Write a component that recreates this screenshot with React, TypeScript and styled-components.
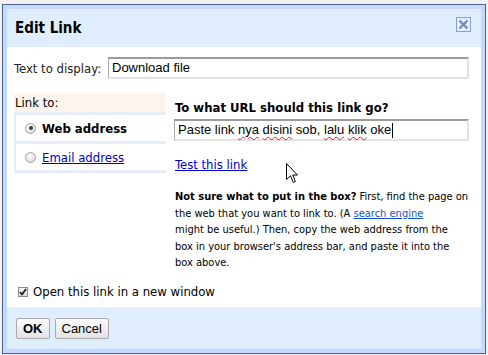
import React from 'react'
import styled, {createGlobalStyle, css} from 'styled-components'

const UI = `"DejaVu Sans Condensed", "DejaVu Sans", sans-serif`
const ARIAL = `"Liberation Sans", Arial, sans-serif`

const GlobalStyle = createGlobalStyle`
    html, body {
        margin: 0;
        padding: 0;
        background: #f2f2f2;
    }
    body {
        font-family: ${UI};
    }
`

// 画面全体
const Page = styled.div`
    position: relative;
    width: 488px;
    height: 355px;
    padding: 4px 2px 0 2px;
    box-sizing: border-box;
`

const Dialog = styled.div`
    width: 484px;
    border: 1px solid #4a6089;
    background: #c3d9ff;
    padding: 4px;
    box-sizing: border-box;
    display: flex;
    flex-direction: column;
`

const TitleBar = styled.div`
    height: 38px;
    background: #e0edfe;
    display: flex;
    align-items: flex-start;
    justify-content: space-between;
    padding: 0 10px 0 8px;
`

const Title = styled.div`
    font-family: ${UI};
    font-weight: bold;
    font-size: 15px;
    line-height: 38px;
    color: #000;
`

const CloseButton = styled.div`
    margin-top: 8px;
    width: 15px;
    height: 15px;
    box-sizing: border-box;
    border: 1px solid #8ba0c9;
    background: #e6efff;
    display: flex;
    align-items: center;
    justify-content: center;
`

const Body = styled.div`
    height: 260px;
    background: #fff;
    padding: 10px 12px 0 7px;
    box-sizing: border-box;
`

const Row = styled.div`
    display: flex;
    align-items: center;
`

const FieldLabel = styled.div`
    width: 94px;
    font-size: 13px;
    color: #222;
    white-space: nowrap;
`

const TextBox = styled.div`
    flex: 1;
    height: 22px;
    box-sizing: border-box;
    border-style: solid;
    border-width: 2px 2px 2px 1px;
    border-color: #9b9b9b #e3e3e3 #e3e3e3 #a9a9a9;
    padding: 0 3px;
    font-family: ${ARIAL};
    font-size: 13px;
    line-height: 18px;
    color: #000;
    white-space: nowrap;
    display: flex;
    align-items: center;
`

const Misspelled = styled.span`
    text-decoration: underline wavy #e02020;
    text-decoration-thickness: 1px;
    text-underline-offset: 2px;
`

const Caret = styled.span`
    display: inline-block;
    width: 1px;
    height: 15px;
    background: #000;
    margin-left: 1px;
`

const LinkSection = styled.div`
    margin-top: 14px;
    display: flex;
    align-items: flex-start;
    gap: 8px;
`

const TabColumn = styled.div`
    width: 152px;
    flex-shrink: 0;
`

const TabHeader = styled.div`
    height: 19px;
    line-height: 19px;
    background: #fdf4ee;
    font-size: 13px;
    color: #000;
    padding-left: 1px;
`

const TabList = styled.div`
    background: #e6ecf8;
    padding: 3px 0 3px 2px;
    display: flex;
    flex-direction: column;
    gap: 3px;
`

const Tab = styled.div`
    height: 26px;
    background: #fff;
    display: flex;
    align-items: center;
    padding-left: 9px;
    gap: 6px;
`

const Radio = styled.span<{$checked?: boolean}>`
    width: 11px;
    height: 11px;
    border-radius: 50%;
    box-sizing: border-box;
    border: 1px solid #a3a3a3;
    background: radial-gradient(circle at 40% 35%, #ffffff 0%, #e4e4e4 60%, #c8c8c8 100%);
    position: relative;
    ${p => p.$checked && css`
        &::after {
            content: '';
            position: absolute;
            left: 2.5px;
            top: 2.5px;
            width: 4px;
            height: 4px;
            border-radius: 50%;
            background: #3a3a3a;
        }
    `}
`

const TabLabel = styled.span`
    font-size: 13px;
    font-weight: bold;
    color: #000;
`

const BlueLink = styled.span`
    font-size: 13px;
    color: #0000cc;
    text-decoration: underline;
`

const Panel = styled.div`
    flex: 1;
    display: flex;
    flex-direction: column;
    padding-top: 7px;
`

const Question = styled.div`
    font-size: 13px;
    font-weight: bold;
    line-height: 16px;
    color: #000;
    padding-left: 1px;
    margin-bottom: 3px;
`

const TestLink = styled(BlueLink)`
    margin-top: 16px;
    line-height: 16px;
    padding-left: 1px;
    align-self: flex-start;
`

// 改行位置は元の画面に合わせてる
const Help = styled.p`
    margin: 16px 0 0;
    padding-left: 1px;
    font-size: 11px;
    line-height: 16.5px;
    color: #000;
    white-space: nowrap;
`

const SearchLink = styled.span`
    color: #1155cc;
    text-decoration: underline;
`

const CheckRow = styled.div`
    margin-top: 12px;
    display: flex;
    align-items: center;
    gap: 5px;
    padding-left: 4px;
    font-size: 13px;
    line-height: 16px;
    color: #000;
`

const CheckBox = styled.span`
    width: 10px;
    height: 10px;
    box-sizing: border-box;
    border: 1px solid #8c8c8c;
    background: linear-gradient(#f4f4f4, #dcdcdc);
    display: flex;
    align-items: center;
    justify-content: center;
`

const Footer = styled.div`
    height: 42px;
    background: #e0edfe;
    display: flex;
    align-items: flex-start;
    gap: 5px;
    padding: 11px 0 0 9px;
    box-sizing: border-box;
`

const Button = styled.div<{$primary?: boolean}>`
    height: 21px;
    box-sizing: border-box;
    padding: 0 6px;
    border: 1px solid #a9a9a9;
    border-radius: 2px;
    background: linear-gradient(#fbfbfb, #e3e3e3);
    font-family: ${ARIAL};
    font-size: 13px;
    font-weight: ${p => (p.$primary ? 'bold' : 'normal')};
    line-height: 19px;
    color: #000;
`

// マウスカーソル（上に重なってる）
const Pointer = styled.svg`
    position: absolute;
    left: 286px;
    top: 163px;
`

export default function App() {
    return (
        <Page>
            <GlobalStyle />
            <Dialog>
                <TitleBar>
                    <Title>Edit Link</Title>
                    <CloseButton>
                        <svg width="11" height="11" viewBox="0 0 11 11">
                            <path d="M1.5 1.5 L9.5 9.5 M9.5 1.5 L1.5 9.5" stroke="#6f87b7" strokeWidth="2.2" />
                        </svg>
                    </CloseButton>
                </TitleBar>
                <Body>
                    <Row>
                        <FieldLabel>Text to display:</FieldLabel>
                        <TextBox>Download file</TextBox>
                    </Row>
                    <LinkSection>
                        <TabColumn>
                            <TabHeader>Link to:</TabHeader>
                            <TabList>
                                <Tab>
                                    <Radio $checked />
                                    <TabLabel>Web address</TabLabel>
                                </Tab>
                                <Tab>
                                    <Radio />
                                    <BlueLink>Email address</BlueLink>
                                </Tab>
                            </TabList>
                        </TabColumn>
                        <Panel>
                            <Question>To what URL should this link go?</Question>
                            <TextBox>
                                Paste link&nbsp;<Misspelled>nya</Misspelled>&nbsp;<Misspelled>disini</Misspelled>&nbsp;sob,&nbsp;<Misspelled>lalu</Misspelled>&nbsp;<Misspelled>klik</Misspelled>&nbsp;oke<Caret />
                            </TextBox>
                            <TestLink>Test this link</TestLink>
                            <Help>
                                <b>Not sure what to put in the box?</b> First, find the page on<br />
                                the web that you want to link to. (A <SearchLink>search engine</SearchLink><br />
                                might be useful.) Then, copy the web address from the<br />
                                box in your browser's address bar, and paste it into the<br />
                                box above.
                            </Help>
                        </Panel>
                    </LinkSection>
                    <CheckRow>
                        <CheckBox>
                            <svg width="8" height="8" viewBox="0 0 8 8">
                                <path d="M1 4 L3 6.5 L7 1" stroke="#111" strokeWidth="1.6" fill="none" />
                            </svg>
                        </CheckBox>
                        Open this link in a new window
                    </CheckRow>
                </Body>
                <Footer>
                    <Button $primary>OK</Button>
                    <Button>Cancel</Button>
                </Footer>
            </Dialog>
            <Pointer width="13" height="21" viewBox="0 0 13 21">
                <path d="M0.5 0.5 L0.5 16.5 L4.5 12.8 L7.2 19.5 L9.4 18.6 L6.8 12 L11.5 12 Z" fill="#fff" stroke="#000" strokeWidth="1" strokeLinejoin="miter" />
            </Pointer>
        </Page>
    )
}
